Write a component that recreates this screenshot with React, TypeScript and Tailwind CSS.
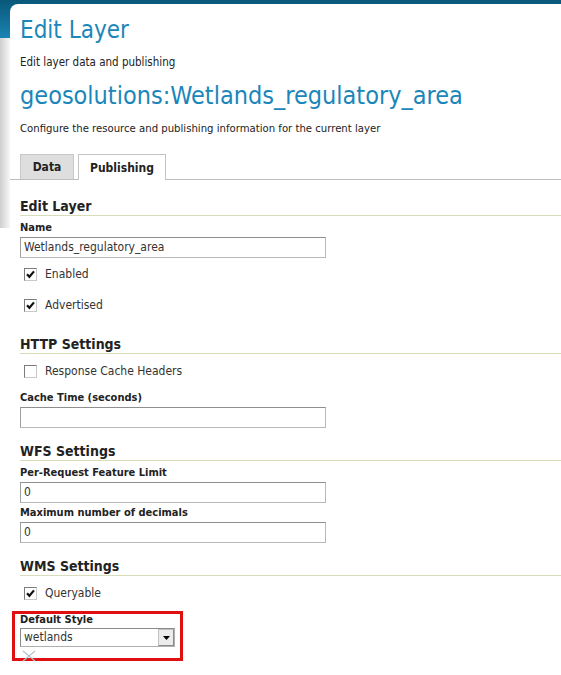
function Checkbox({ checked }: { checked: boolean }) {
  return (
    <span className="inline-flex w-[13px] h-[13px] border border-[#7c7c7c] border-r-[#c9c9c9] border-b-[#c9c9c9] bg-white items-center justify-center">
      {checked && (
        <svg width="9" height="9" viewBox="0 0 9 9">
          <path d="M1 4.2 L3.4 6.8 L8 1.4" fill="none" stroke="#111" strokeWidth="2.2" />
        </svg>
      )}
    </span>
  );
}

function CheckRow({ label, checked }: { label: string; checked: boolean }) {
  return (
    <label className="flex items-center gap-[8px] pl-[4px] h-[14px] text-[12px] leading-[14px] text-[#333]">
      <Checkbox checked={checked} />
      <span>{label}</span>
    </label>
  );
}

function Section({ title }: { title: string }) {
  return (
    <h3 className="text-[14px] font-bold text-[#222] leading-[16px] pb-[1px] border-b border-[#d6ddb8]">{title}</h3>
  );
}

function Label({ text }: { text: string }) {
  return <span className="block text-[11px] font-bold text-[#222] leading-[14px]">{text}</span>;
}

function Input({ value }: { value: string }) {
  return (
    <div className="mt-[2px] w-[306px] h-[21px] border border-[#b8b8b8] border-t-[#8f8f8f] border-l-[#a0a0a0] px-[3px] text-[12px] leading-[19px] text-[#333]">{value}</div>
  );
}

export default function App() {
  return (
    <div className="relative w-[561px] h-[675px] overflow-hidden bg-white" style={{ fontFamily: '"DejaVu Sans Condensed", "DejaVu Sans", Tahoma, sans-serif' }}>
      <div className="absolute inset-x-0 top-0 h-[38px] bg-gradient-to-b from-[#09587a] to-[#1b84b3]" />
      <div className="absolute left-0 top-[38px] w-[12px] h-[190px] bg-gradient-to-r from-[#cfcfcf] to-white" />
      <div className="relative ml-[10px] mt-[4px] h-[671px] bg-white rounded-tl-[8px] pl-[10px]">
        <h1 className="pt-[11px] text-[24px] leading-[30px] text-[#1b86ba]">Edit Layer</h1>
        <p className="mt-[9px] text-[11.5px] leading-[16px] text-[#222]">Edit layer data and publishing</p>
        <h2 className="mt-[11px] text-[25px] leading-[30px] text-[#1b86ba]">geosolutions:Wetlands_regulatory_area</h2>
        <p className="mt-[10px] text-[11.25px] leading-[16px] text-[#222]">Configure the resource and publishing information for the current layer</p>

        <div className="mt-[17px] flex items-end -ml-[10px] pl-[10px] border-b border-[#bdbdbd] h-[26px]">
          <div className="h-[25px] w-[54px] flex items-center justify-center bg-[#dedede] border border-[#c8c8c8] border-b-0 text-[12px] font-bold text-[#222]">Data</div>
          <div className="ml-[4px] h-[26px] w-[88px] -mb-px flex items-center justify-center bg-white border border-[#c4c4c4] border-b-0 text-[12px] font-bold text-[#222]">Publishing</div>
        </div>

        <div className="mt-[18px] flex flex-col">
          <Section title="Edit Layer" />
          <div className="mt-[5px]"><Label text="Name" /><Input value="Wetlands_regulatory_area" /></div>
          <div className="mt-[9px]"><CheckRow label="Enabled" checked /></div>
          <div className="mt-[17px]"><CheckRow label="Advertised" checked /></div>

          <div className="mt-[24px]"><Section title="HTTP Settings" /></div>
          <div className="mt-[10px]"><CheckRow label="Response Cache Headers" checked={false} /></div>
          <div className="mt-[13px]"><Label text="Cache Time (seconds)" /><Input value="" /></div>

          <div className="mt-[15px]"><Section title="WFS Settings" /></div>
          <div className="mt-[5px]"><Label text="Per-Request Feature Limit" /><Input value="0" /></div>
          <div className="mt-[3px]"><Label text="Maximum number of decimals" /><Input value="0" /></div>

          <div className="mt-[15px]"><Section title="WMS Settings" /></div>
          <div className="mt-[10px]"><CheckRow label="Queryable" checked /></div>

          <div className="mt-[11px] -ml-[8px] w-[171px] h-[50px] border-[3px] border-[#e01010] pl-[5px]">
            <span className="block text-[11px] font-bold text-[#222] leading-[12px]">Default Style</span>
            <div className="mt-[2px] w-[155px] h-[19px] flex border border-[#8a8a8a] border-r-[#b0b0b0] border-b-[#b0b0b0] bg-white">
              <span className="flex-1 px-[3px] text-[12px] leading-[17px] text-[#333]">wetlands</span>
              <span className="w-[16px] h-[17px] flex items-center justify-center bg-[#ececec] border border-[#c0c0c0] border-r-[#8a8a8a] border-b-[#8a8a8a]">
                <svg width="7" height="4" viewBox="0 0 7 4"><path d="M0 0 H7 L3.5 4 Z" fill="#000" /></svg>
              </span>
            </div>
            <svg className="mt-[3px] ml-[2px]" width="14" height="12" viewBox="0 0 14 12">
              <path d="M1 1 L7 6 L13 1 M1 11 L7 6 L13 11" fill="none" stroke="#b4c0cc" strokeWidth="1.2" />
            </svg>
          </div>
        </div>
      </div>
    </div>
  );
}
